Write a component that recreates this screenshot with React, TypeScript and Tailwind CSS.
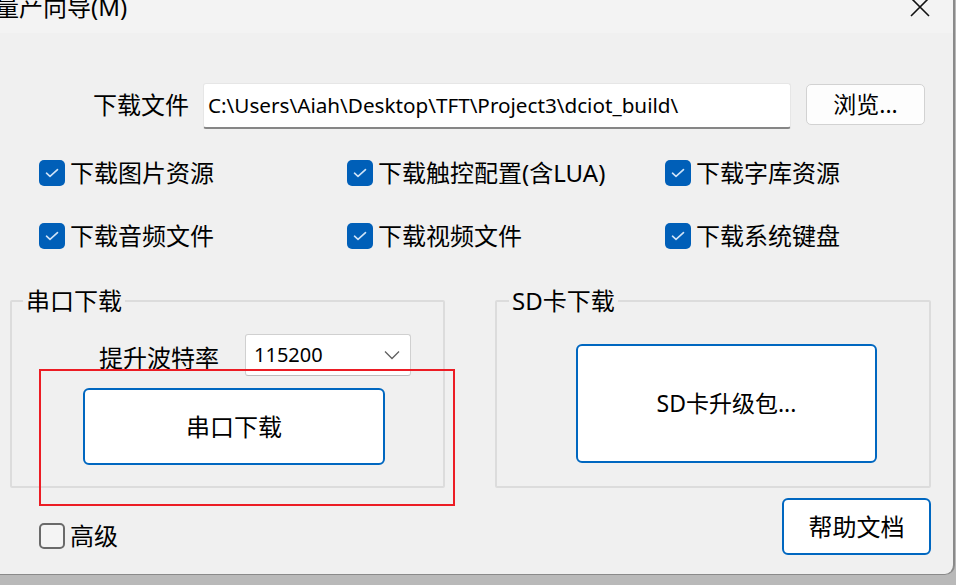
import React from 'react';

const FONT = { fontFamily: '"Noto Sans", "Noto Sans CJK SC", sans-serif' };

const Check: React.FC<{ checked?: boolean }> = ({ checked }) =>
  checked ? (
    <span className="w-[26px] h-[26px] rounded-[5px] bg-[#005fb8] flex items-center justify-center shrink-0">
      <svg width="14" height="10" viewBox="0 0 14 10" fill="none">
        <path d="M1.5 5.2 L5 8.4 L12.5 1.6" stroke="#cfe3f7" strokeWidth="1.6" strokeLinecap="round" strokeLinejoin="round" />
      </svg>
    </span>
  ) : (
    <span className="w-[26px] h-[26px] rounded-[5px] border-2 border-[#6a6a6a] bg-[#f4f4f4] shrink-0" />
  );

const Option: React.FC<{ label: string; checked?: boolean }> = ({ label, checked = true }) => (
  <label className="flex items-center gap-[5px] h-[26px] text-[24px] leading-none text-black whitespace-nowrap">
    <Check checked={checked} />
    <span>{label}</span>
  </label>
);

export default function App() {
  return (
    <div className="w-[956px] h-[585px] overflow-hidden flex flex-col bg-[#b9b9b9] select-none" style={FONT}>
      {/* dialog window */}
      <div className="w-[955px] h-[575px] shrink-0 bg-[#f0f0f0] border-r-2 border-b border-[#8a8a8a] rounded-br-[10px] flex flex-col">
        {/* title bar */}
        <div className="h-[33px] shrink-0 bg-[#f3f3f3] flex items-start justify-between">
          <span className="-mt-[5px] -ml-[5px] text-[24px] leading-[24px] text-black">量产向导(M)</span>
          <svg className="mr-[23px] -mt-[3px]" width="20" height="20" viewBox="0 0 20 20">
            <path d="M1 1 L19 19 M19 1 L1 19" stroke="#111" strokeWidth="1.6" />
          </svg>
        </div>

        {/* file row */}
        <div className="flex items-start mt-[50px] ml-[93px]">
          <span className="text-[24px] leading-none mt-[10px] text-black">下载文件</span>
          <div className="ml-[14px] w-[588px] h-[46px] bg-white border border-[#e6e6e6] border-b-2 border-b-[#868686] rounded-[3px] flex items-center pl-[4px] text-[20.7px] text-black">
            C:\Users\Aiah\Desktop\TFT\Project3\dciot_build\
          </div>
          <button className="ml-[15px] mt-[1px] w-[119px] h-[41px] bg-[#fdfdfd] border border-[#d2d2d2] rounded-[5px] text-[23px] leading-none text-black">
            浏览...
          </button>
        </div>

        {/* options */}
        <div className="grid grid-cols-[308px_318px_auto] gap-y-[37px] ml-[39px] mt-[31px]">
          <Option label="下载图片资源" />
          <Option label="下载触控配置(含LUA)" />
          <Option label="下载字库资源" />
          <Option label="下载音频文件" />
          <Option label="下载视频文件" />
          <Option label="下载系统键盘" />
        </div>

        {/* group boxes */}
        <div className="flex items-start mt-[40px] ml-[10px]">
          <fieldset className="relative w-[435px] h-[199px] border-2 border-[#dcdcdc] rounded-[2px]">
            <legend className="ml-[11px] px-[3px] text-[24px] leading-[23px] text-black">串口下载</legend>
            <div className="flex items-center ml-[87px] mt-[22px]">
              <span className="text-[24px] leading-none mt-[6px] text-black">提升波特率</span>
              <div className="ml-[26px] w-[166px] h-[42px] bg-white border border-[#d0d0d0] border-b-[#bdbdbd] rounded-[3px] flex items-center justify-between pl-[8px] pr-[10px]">
                <span className="text-[20px] leading-none text-black">115200</span>
                <svg width="16" height="10" viewBox="0 0 16 10" fill="none">
                  <path d="M1 1.5 L8 8.5 L15 1.5" stroke="#606060" strokeWidth="1.3" />
                </svg>
              </div>
            </div>
            <button className="ml-[71px] mt-[12px] w-[302px] h-[77px] bg-white border-2 border-[#0067c0] rounded-[6px] text-[24px] leading-none text-black">
              串口下载
            </button>
          </fieldset>

          <div className="ml-[50px] flex flex-col items-end">
            <fieldset className="w-[436px] h-[199px] border-2 border-[#dcdcdc] rounded-[2px]">
              <legend className="ml-[12px] px-[3px] text-[24px] leading-[23px] text-black">SD卡下载</legend>
              <button className="ml-[79px] mt-[32px] w-[301px] h-[119px] bg-white border-2 border-[#0067c0] rounded-[6px] text-[23px] leading-none text-black">
                SD卡升级包...
              </button>
            </fieldset>
            <button className="mt-[10px] w-[149px] h-[57px] bg-white border-2 border-[#0067c0] rounded-[6px] text-[24px] leading-none text-black">
              帮助文档
            </button>
          </div>
        </div>

        {/* advanced */}
        <div className="ml-[39px] -mt-[32px]">
          <Option label="高级" checked={false} />
        </div>
      </div>

      {/* red annotation frame */}
      <div className="absolute left-[39px] top-[369px] w-[416px] h-[137px] border-2 border-[#ec1c24] pointer-events-none" />
    </div>
  );
}
